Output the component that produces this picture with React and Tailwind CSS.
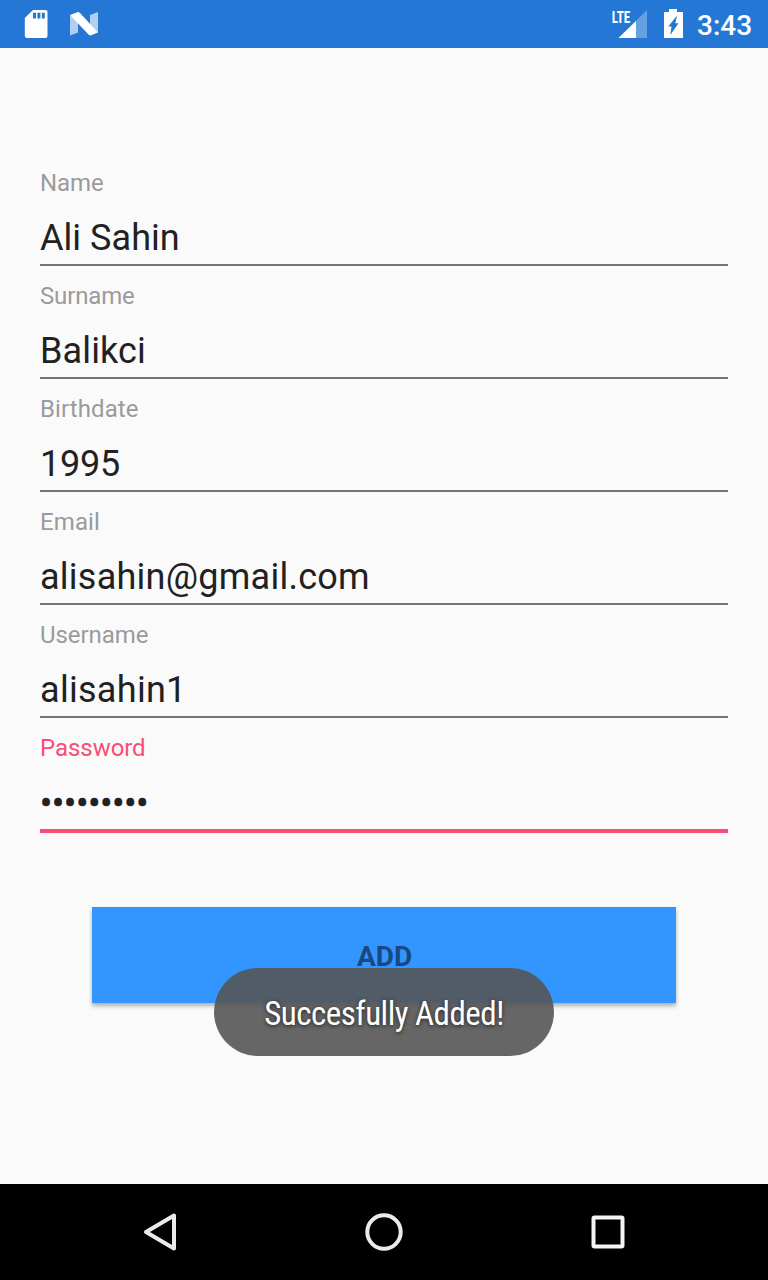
const fields = [
  { label: 'Name', value: 'Ali Sahin', labelClass: 'tracking-[-0.1px]', valueClass: 'tracking-[0.05px]' },
  { label: 'Surname', value: 'Balikci', labelClass: 'tracking-[-0.15px]', valueClass: 'tracking-[0.12px]' },
  { label: 'Birthdate', value: '1995', labelClass: 'tracking-[0.1px]', valueClass: 'tracking-[-0.2px]' },
  { label: 'Email', value: 'alisahin@gmail.com', labelClass: 'tracking-[0.1px]', valueClass: 'tracking-[0.25px]' },
  { label: 'Username', value: 'alisahin1', labelClass: 'tracking-[-0.05px]', valueClass: 'tracking-[0.3px]' },
];

function StatusBar() {
  return (
    <header className="flex h-12 items-center justify-between bg-[#2577d5] text-white">
      <svg width="130" height="48" viewBox="0 0 130 48" fill="white">
        <path fillRule="evenodd" d="M33 10H45.5a2 2 0 0 1 2 2V36a2 2 0 0 1-2 2H27a2.2 2.2 0 0 1-2.2-2.2V18zM33 12.8v5.8h3v-5.8zM37.400 12.8v5.8h3v-5.8zM41.800 12.8v5.8h3v-5.8z" />
        <path d="M70 15l8 3v14.500l-8 3zM90 15l8-3v20.500l-8-3z" opacity=".65" />
        <path d="M70 15l8-3q1 0 2 1l18 19.500-7.500 3q-1 0-2-1z" />
      </svg>
      <div className="flex items-center">
        <svg width="92" height="48" viewBox="605 0 92 48" fill="white">
          <path d="M618.500 38L647 10V38z" opacity=".3" />
          <path d="M618.500 38L636 21V38z" />
          <text x="611.700" y="22.500" fontFamily="'Roboto Condensed', Roboto, sans-serif" fontSize="17" fontWeight="700" textLength="18.500" lengthAdjust="spacingAndGlyphs">LTE</text>
          <path fillRule="evenodd" d="M669 9h8v3h5.500a.5.5 0 0 1 .5.5V37.500a.5.5 0 0 1-.5.5H664.500a.5.5 0 0 1-.5-.5V12.500a.5.5 0 0 1 .5-.5H669zM677 15.500L668.300 26.500H671.500l-1.200 8.500L678.500 23.200H675.300z" />
        </svg>
        <span className="w-[71px] pt-1 text-[28px] font-medium leading-[48px]">3:43</span>
      </div>
    </header>
  );
}

export default function App() {
  return (
    <div className="flex h-[1280px] w-[768px] flex-col bg-[#fafafa] font-['Roboto',sans-serif] text-[#212121]">
      <StatusBar />
      <main className="flex-1 px-10 pt-[119px]">
        {fields.map(({ label, value, labelClass, valueClass }) => (
          <div key={label} className="h-[113px]">
            <div className={`h-8 text-[24px] leading-8 text-[#9b9b9b] ${labelClass}`}>{label}</div>
            <div className={`h-[67px] border-b-2 border-[#737373] pt-[2px] text-[36px] leading-[74px] ${valueClass}`}>{value}</div>
          </div>
        ))}
        <div className="h-[113px]">
          <div className="h-8 text-[24px] leading-8 tracking-[-0.05px] text-[#f94d76]">Password</div>
          <div className="h-[69px] border-b-4 border-[#f94d76] pt-[2px] text-[36px] leading-[76px] tracking-[-0.1px] [-webkit-text-stroke:0.6px_#212121]">•••••••••</div>
        </div>
        <div className="relative mx-[52px] mt-[62px] h-24 bg-[#3395ff] text-center text-[28px] font-bold leading-[100px] text-[#19497e] shadow-[0_3px_4px_rgba(0,0,0,0.3)]">
          <span className="pl-px">ADD</span>
          <div className="absolute left-[122px] top-[61px] h-[88px] w-[340px] rounded-full bg-[#555555]/90 font-['Roboto_Condensed','Roboto',sans-serif] text-[33px] font-normal leading-[92px] tracking-[-0.5px] text-white [font-stretch:75%] [text-shadow:0_1px_4px_rgba(0,0,0,0.7)]">
            Succesfully Added!
          </div>
        </div>
      </main>
      <nav className="flex h-24 justify-around bg-black px-12">
        <svg width="224" height="96" viewBox="48 0 224 96" fill="none" stroke="#ebebeb" strokeWidth="4"><path d="M174 31.500v33L146 48z" strokeLinejoin="round" /></svg>
        <svg width="224" height="96" fill="none" stroke="#ebebeb" strokeWidth="4"><circle cx="112" cy="48" r="16.700" /></svg>
        <svg width="224" height="96" fill="none" stroke="#f4f4f4" strokeWidth="4"><rect x="97.500" y="33.500" width="29" height="29" rx="1" /></svg>
      </nav>
    </div>
  );
}
